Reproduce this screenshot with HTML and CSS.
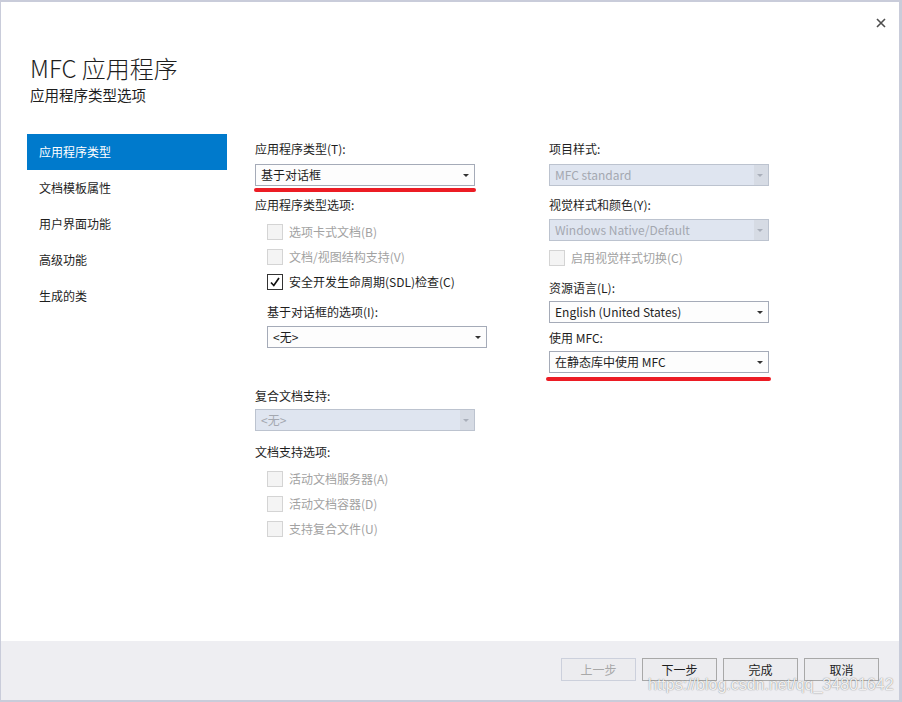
FILE: index.html
```html
<!DOCTYPE html>
<html lang="zh-CN">

<head>
    <meta charset="UTF-8">
    <meta name="viewport" content="width=device-width, initial-scale=1.0">
    <title>MFC 应用程序</title>

    <link rel="stylesheet" href="styles.css">
</head>

<body>
    <div class="dialog">
        <button class="close-btn" title="关闭">
            <svg width="10" height="10" viewBox="0 0 10 10">
                <path d="M1 1 L9 9 M9 1 L1 9" stroke="#4d4d4d" stroke-width="1.6" fill="none" />
            </svg>
        </button>

        <div class="header">
            <h1 class="title">MFC 应用程序</h1>
            <div class="subtitle">应用程序类型选项</div>
        </div>

        <div class="main">
            <ul class="nav">
                <li class="nav-item active">应用程序类型</li>
                <li class="nav-item">文档模板属性</li>
                <li class="nav-item">用户界面功能</li>
                <li class="nav-item">高级功能</li>
                <li class="nav-item">生成的类</li>
            </ul>

            <div class="col col-left">
                <label class="field-label">应用程序类型(T):</label>
                <div class="select mt7">基于对话框<span class="arrow"></span></div>
                <div class="mark mark-left"></div>

                <label class="field-label mt5">应用程序类型选项:</label>
                <div class="checks indent mt11">
                    <div class="check disabled"><span class="box"></span>选项卡式文档(B)</div>
                    <div class="check disabled"><span class="box"></span>文档/视图结构支持(V)</div>
                    <div class="check"><span class="box checked">
                            <svg width="14" height="14" viewBox="0 0 14 14">
                                <path d="M3 7.5 L5.8 10.5 L11 3" stroke="#111" stroke-width="1.7" fill="none" />
                            </svg>
                        </span>安全开发生命周期(SDL)检查(C)</div>
                </div>

                <label class="field-label indent mt14">基于对话框的选项(I):</label>
                <div class="select indent mt6">&lt;无&gt;<span class="arrow"></span></div>

                <label class="field-label mt40">复合文档支持:</label>
                <div class="select disabled mt5">&lt;无&gt;<span class="arrow"></span></div>

                <label class="field-label mt13">文档支持选项:</label>
                <div class="checks indent mt11">
                    <div class="check disabled"><span class="box"></span>活动文档服务器(A)</div>
                    <div class="check disabled"><span class="box"></span>活动文档容器(D)</div>
                    <div class="check disabled"><span class="box"></span>支持复合文件(U)</div>
                </div>
            </div>

            <div class="col col-right">
                <label class="field-label">项目样式:</label>
                <div class="select disabled mt7">MFC standard<span class="arrow"></span></div>

                <label class="field-label mt11">视觉样式和颜色(Y):</label>
                <div class="select disabled mt6">Windows Native/Default<span class="arrow"></span></div>

                <div class="check disabled mt9"><span class="box"></span>启用视觉样式切换(C)</div>

                <label class="field-label mt14">资源语言(L):</label>
                <div class="select mt5">English (United States)<span class="arrow"></span></div>

                <label class="field-label mt7">使用 MFC:</label>
                <div class="select mt5">在静态库中使用 MFC<span class="arrow"></span></div>
                <div class="mark mark-right"></div>
            </div>
        </div>

        <div class="footer">
            <button class="btn" disabled>上一步</button>
            <button class="btn">下一步</button>
            <button class="btn">完成</button>
            <button class="btn">取消</button>
        </div>

        <div class="watermark">https://blog.csdn.net/qq_34801642</div>
    </div>
</body>

</html>
```

FILE: styles.css
```css
* {
    box-sizing: border-box;
}

body {
    margin: 0;
    background-color: #c9ccda;
    font-family: "Noto Sans CJK SC", sans-serif;
    font-size: 12px;
    color: #1e1e1e;
}

.dialog {
    position: relative;
    display: flex;
    flex-direction: column;
    width: 898px;
    height: 698px;
    margin: 2px 3px 2px 1px;
    background-color: white;
}

.close-btn {
    position: absolute;
    top: 14px;
    right: 11px;
    width: 14px;
    height: 14px;
    padding: 0 2px;
    border: 0;
    background: none;
}

.header {
    padding: 51px 0 0 29px;
}

.title {
    margin: 0;
    font-size: 24px;
    font-weight: 300;
    line-height: 30px;
    color: #1e1e1e;
}

.subtitle {
    margin-top: 3px;
    font-size: 14.5px;
    line-height: 18px;
}

.main {
    display: flex;
    flex: 1;
    margin-top: 30px;
}

.nav {
    list-style: none;
    margin: 0 0 0 26px;
    padding: 0;
    width: 200px;
}

.nav-item {
    height: 36px;
    line-height: 36px;
    padding-left: 12px;
}

.nav-item.active {
    background-color: #007acc;
    color: white;
}

.col {
    padding-top: 7px;
}

.col-left {
    width: 294px;
    margin-left: 28px;
}

.col-right {
    width: 220px;
}

.field-label {
    display: block;
    line-height: 16px;
}

.select {
    position: relative;
    width: 220px;
    height: 22px;
    line-height: 20px;
    padding-left: 5px;
    border: 1px solid #a5abb8;
    background-color: #fdfdfd;
}

.select .arrow {
    position: absolute;
    right: 5px;
    top: 9px;
    border-left: 3px solid transparent;
    border-right: 3px solid transparent;
    border-top: 3px solid #333;
}

.select.disabled {
    color: #a4a8b0;
    border-color: #bcc3cf;
    background: linear-gradient(to left, #d6dbe4 14px, #dfe5f0 14px);
}

.select.disabled .arrow {
    border-top-color: #a9afba;
}

.mark {
    height: 4px;
    border-radius: 2px;
    background-color: #ec1c24;
}

.mark-left {
    width: 222px;
    margin: 2px 0 0 -1px;
}

.mark-right {
    width: 225px;
    margin: 4px 0 0 -3px;
}

.indent {
    margin-left: 12px;
}

.checks {
    display: flex;
    flex-direction: column;
    gap: 9px;
}

.check {
    display: flex;
    align-items: center;
    height: 16px;
    line-height: 16px;
}

.check .box {
    display: flex;
    align-items: center;
    justify-content: center;
    width: 16px;
    height: 16px;
    margin-right: 6px;
    border: 1px solid #d4d4d4;
    background-color: #f4f4f4;
}

.check .box.checked {
    border-color: #333;
    background-color: white;
}

.check.disabled {
    color: #a2a2a2;
}

.mt5 { margin-top: 5px; }
.mt6 { margin-top: 6px; }
.mt7 { margin-top: 7px; }
.mt9 { margin-top: 9px; }
.mt11 { margin-top: 11px; }
.mt13 { margin-top: 13px; }
.mt14 { margin-top: 14px; }
.mt40 { margin-top: 40px; }

.footer {
    display: flex;
    justify-content: flex-end;
    gap: 6px;
    height: 59px;
    padding: 17px 20px 0 0;
    background-color: #eeeef2;
}

.btn {
    width: 75px;
    height: 23px;
    padding: 0;
    font-family: "Noto Sans CJK SC", sans-serif;
    font-size: 12px;
    color: #1e1e1e;
    border: 1px solid #a8a8a8;
    background-color: #ececef;
}

.btn:disabled {
    color: #a8a8a8;
    border-color: #ccd0dc;
}

.watermark {
    position: absolute;
    left: 647px;
    top: 674px;
    font-family: "Liberation Sans", sans-serif;
    font-size: 16px;
    color: rgba(255, 255, 255, 0.9);
    text-shadow: 0 0 1px rgba(0, 0, 0, 0.45), 0 0 2px rgba(0, 0, 0, 0.15);
    white-space: nowrap;
}
```
